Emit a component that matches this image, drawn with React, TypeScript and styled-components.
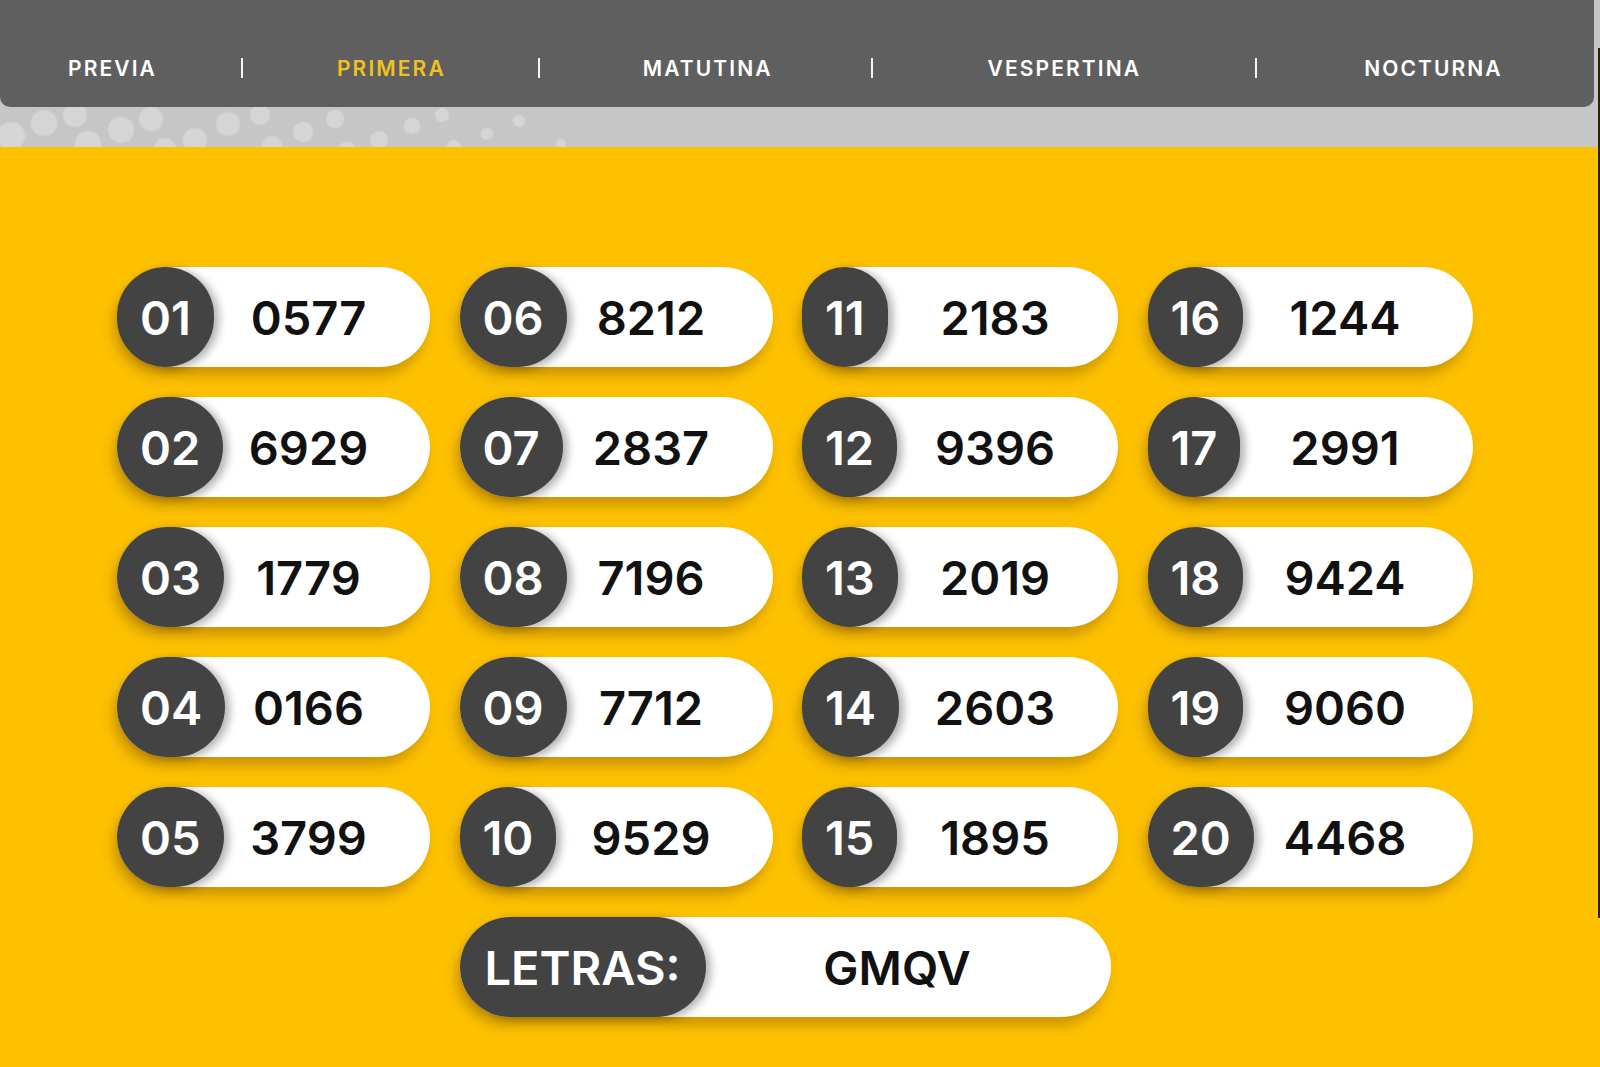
import React from "react";
import styled, { createGlobalStyle } from "styled-components";

const GlobalStyle = createGlobalStyle`
  html, body { margin: 0; padding: 0; }
  body {
    font-family: Inter, "Liberation Sans", sans-serif;
    background: #fdc100;
  }
`;

const Page = styled.div`
  position: relative;
  min-height: 100vh;
  display: flex;
  flex-direction: column;
  background: #fdc100;
  overflow: hidden;
`;

const dots: [number, number, number][] = [
  [11, 136, 13], [44, 123, 12], [75, 115, 11], [88, 144, 12], [121, 130, 12],
  [151, 119, 11], [165, 149, 10], [195, 140, 11], [228, 124, 11], [260, 115, 9],
  [272, 146, 9], [303, 132, 9], [335, 119, 8], [347, 151, 8], [379, 140, 8],
  [412, 126, 7], [442, 115, 6], [454, 147, 6], [487, 134, 5], [519, 121, 5], [561, 144, 4],
];

const dotBg = dots
  .map(
    ([x, y, r]) =>
      `radial-gradient(circle at ${x}px ${y}px, rgba(232,232,232,0.45) 0 ${r}px, rgba(232,232,232,0) ${r + 2}px)`
  )
  .join(", ");

const Header = styled.header`
  background-color: #c6c6c6;
  background-image: ${dotBg};
  background-repeat: no-repeat;
  padding-bottom: 40px;
`;

const Nav = styled.nav`
  height: 107px;
  box-sizing: border-box;
  margin-right: 6px;
  padding: 29px 0 0 68px;
  background: #5f5f5f;
  border-radius: 0 0 10px 10px;
  display: flex;
  align-items: center;
`;

const NavItem = styled.a<{ $active?: boolean; $left: number; $right: number }>`
  padding: 0 ${(p) => p.$right}px 0 ${(p) => p.$left}px;
  color: ${(p) => (p.$active ? "#f1c21b" : "#ffffff")};
  font-family: Inter, "Liberation Sans", sans-serif;
  font-size: 21px;
  font-weight: 600;
  letter-spacing: 2.1px;
  text-decoration: none;
  white-space: nowrap;
`;

const Sep = styled.span`
  width: 2px;
  height: 20px;
  background: #f4f4f4;
`;

const Board = styled.main`
  flex: 1;
  display: grid;
  grid-template-columns: 313px 313px 316px 325px;
  grid-auto-rows: 100px;
  column-gap: 29.5px;
  row-gap: 30px;
  padding: 120px 0 40px 117px;
  align-content: start;
`;

const Pill = styled.div`
  display: grid;
  height: 100px;
  background: #ffffff;
  border-radius: 50px;
  box-shadow: -4px 9px 12px rgba(120, 75, 0, 0.35);
`;

const Badge = styled.span`
  grid-area: 1 / 1;
  justify-self: start;
  position: relative;
  z-index: 1;
  height: 100px;
  box-sizing: border-box;
  padding: 0 23px;
  display: flex;
  align-items: center;
  justify-content: center;
  background: #434343;
  color: #ffffff;
  border-radius: 50px;
  font-size: 47px;
  font-weight: 600;
  box-shadow: 5px 2px 9px rgba(0, 0, 0, 0.3);
`;

const Value = styled.span`
  grid-area: 1 / 1;
  display: flex;
  align-items: center;
  justify-content: center;
  padding-left: 70px;
  color: #111111;
  font-size: 47px;
  font-weight: 600;
`;

const LetrasPill = styled.div`
  grid-column: 2 / span 2;
  justify-self: start;
  width: 651px;
  height: 100px;
  display: flex;
  background: #ffffff;
  border-radius: 50px;
  box-shadow: -4px 9px 12px rgba(120, 75, 0, 0.35);
`;

const LetrasLabel = styled.span`
  height: 100px;
  box-sizing: border-box;
  padding: 0 25px;
  display: flex;
  align-items: center;
  background: #434343;
  color: #ffffff;
  border-radius: 50px;
  font-size: 47px;
  font-weight: 600;
  box-shadow: 5px 2px 9px rgba(0, 0, 0, 0.3);
`;

const LetrasValue = styled.span`
  flex: 1;
  display: flex;
  align-items: center;
  justify-content: center;
  padding-right: 22px;
  color: #111111;
  font-size: 47px;
  font-weight: 600;
`;

const EdgeLine = styled.div`
  position: absolute;
  top: 48px;
  right: 0;
  width: 2px;
  height: 870px;
  background: #2b2400;
`;

const navItems: { label: string; left: number; right: number }[] = [
  { label: "PREVIA", left: 0, right: 84 },
  { label: "PRIMERA", left: 94, right: 92 },
  { label: "MATUTINA", left: 103, right: 98 },
  { label: "VESPERTINA", left: 115, right: 114 },
  { label: "NOCTURNA", left: 107, right: 0 },
];

const results: [string, string][] = [
  ["01", "0577"], ["06", "8212"], ["11", "2183"], ["16", "1244"],
  ["02", "6929"], ["07", "2837"], ["12", "9396"], ["17", "2991"],
  ["03", "1779"], ["08", "7196"], ["13", "2019"], ["18", "9424"],
  ["04", "0166"], ["09", "7712"], ["14", "2603"], ["19", "9060"],
  ["05", "3799"], ["10", "9529"], ["15", "1895"], ["20", "4468"],
];

export default function App() {
  return (
    <Page>
      <GlobalStyle />
      <Header>
        <Nav>
          {navItems.map((item, i) => (
            <React.Fragment key={item.label}>
              {i > 0 && <Sep />}
              <NavItem
                href="#"
                $left={item.left}
                $right={item.right}
                $active={item.label === "PRIMERA"}
              >
                {item.label}
              </NavItem>
            </React.Fragment>
          ))}
        </Nav>
      </Header>
      <Board>
        {results.map(([pos, num]) => (
          <Pill key={pos}>
            <Badge>{pos}</Badge>
            <Value>{num}</Value>
          </Pill>
        ))}
        <LetrasPill>
          <LetrasLabel>LETRAS:</LetrasLabel>
          <LetrasValue>GMQV</LetrasValue>
        </LetrasPill>
      </Board>
      <EdgeLine />
    </Page>
  );
}
